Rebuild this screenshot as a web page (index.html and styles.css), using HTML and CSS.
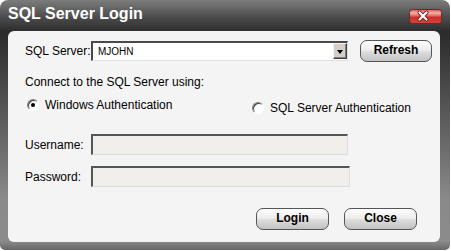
FILE: index.html
```html
<!DOCTYPE html>
<html lang="en">
<head>
    <meta charset="UTF-8">
    <meta name="viewport" content="width=device-width, initial-scale=1.0">
    <title>SQL Server Login</title>
    <link rel="stylesheet" href="styles.css">
</head>
<body>
    <div class="window">
        <div class="titlebar">
            <h1 class="title">SQL Server Login</h1>
            <button class="close-btn" title="Close">
                <svg width="33" height="15" viewBox="0 0 33 15">
                    <defs>
                        <linearGradient id="red" x1="0" y1="0" x2="0" y2="1">
                            <stop offset="0" stop-color="#d8564e"/>
                            <stop offset="0.25" stop-color="#f2b0aa"/>
                            <stop offset="0.45" stop-color="#e26a62"/>
                            <stop offset="0.55" stop-color="#c8302a"/>
                            <stop offset="1" stop-color="#d9463c"/>
                        </linearGradient>
                    </defs>
                    <rect x="0.5" y="0.5" width="32" height="14" rx="3" fill="url(#red)" stroke="#6e2622"/>
                    <path d="M10.5 3.5l7 7M17.5 3.5l-7 7" stroke="#7a1d18" stroke-width="4" stroke-linecap="round"/>
                    <path d="M10.5 3.5l7 7M17.5 3.5l-7 7" stroke="#fff" stroke-width="2.2" stroke-linecap="round"/>
                </svg>
            </button>
        </div>

        <div class="panel">
            <div class="server-row">
                <label class="field-label">SQL Server:</label>
                <div class="combo">
                    <span class="combo-value">MJOHN</span>
                    <span class="combo-arrow"></span>
                </div>
                <button class="btn btn-refresh">Refresh</button>
            </div>

            <p class="connect-text">Connect to the SQL Server using:</p>

            <div class="auth-row">
                <label class="radio-option">
                    <span class="radio checked"></span>
                    Windows Authentication
                </label>
                <label class="radio-option radio-sql">
                    <span class="radio"></span>
                    SQL Server Authentication
                </label>
            </div>

            <div class="field-row field-user">
                <label class="field-label">Username:</label>
                <input class="text-input" type="text">
            </div>
            <div class="field-row field-pass">
                <label class="field-label">Password:</label>
                <input class="text-input text-wide" type="password">
            </div>

            <div class="actions">
                <button class="btn">Login</button>
                <button class="btn">Close</button>
            </div>
        </div>
    </div>
</body>
</html>
```

FILE: styles.css
```css
* {
    box-sizing: border-box;
}

body {
    margin: 0;
    background: #fff;
    font-family: "Liberation Sans", Arial, sans-serif;
    font-size: 12px;
    color: #000;
}

.window {
    width: 450px;
    height: 250px;
    padding: 0 10px 8px 8px;
    display: flex;
    flex-direction: column;
    border-radius: 8px 8px 5px 5px;
    background: linear-gradient(to bottom, #7c7c7c 0, #4a4a4a 18px, #2b2b2b 32px, #3a3a3a 60px, #8a8a8a 200px, #8c8c8c 241px, #666 250px);
}

.titlebar {
    height: 31px;
    display: flex;
    justify-content: space-between;
    align-items: flex-start;
}

.title {
    margin: 6px 0 0;
    font-size: 16px;
    line-height: 16px;
    font-weight: bold;
    color: #fff;
}

.close-btn {
    margin: 9px -2px 0 0;
    padding: 0;
    border: none;
    background: none;
    width: 33px;
    height: 15px;
    display: block;
    cursor: pointer;
}

.close-btn svg {
    display: block;
}

.panel {
    flex: 1;
    background: #f4f4f4;
    border-radius: 6px;
    padding: 9px 8px 0 17px;
}

.field-label {
    width: 66px;
    flex-shrink: 0;
    line-height: 14px;
}

.server-row {
    display: flex;
    align-items: center;
    height: 22px;
}

.combo {
    width: 257px;
    height: 20px;
    display: flex;
    background: #fff;
    border-style: solid;
    border-width: 2px 1px 1px 2px;
    border-color: #4a4a4a #e2e2e2 #e2e2e2 #4a4a4a;
}

.combo-value {
    flex: 1;
    padding-left: 5px;
    font-size: 10px;
    line-height: 17px;
}

.combo-arrow {
    width: 14px;
    height: 16px;
    margin-top: 0;
    background: #d4d0c8;
    border-style: solid;
    border-width: 1px;
    border-color: #f4f4f4 #404040 #404040 #f4f4f4;
    box-shadow: inset -1px -1px 0 #808080;
    display: flex;
    align-items: center;
    justify-content: center;
}

.combo-arrow::after {
    content: "";
    border-left: 3.5px solid transparent;
    border-right: 3.5px solid transparent;
    border-top: 4px solid #000;
    margin-top: 1px;
}

.btn {
    width: 73px;
    height: 22px;
    padding: 0 0 3px;
    border: 1px solid #555;
    border-radius: 7px;
    background: linear-gradient(to bottom, #fdfdfd 0, #ededed 45%, #dcdcdc 55%, #c2c2c2 100%);
    font-family: inherit;
    font-size: 12px;
    font-weight: bold;
    color: #000;
    cursor: pointer;
}

.btn-refresh {
    width: 72px;
    margin-left: 12px;
}

.connect-text {
    margin: 13px 0 0;
    line-height: 14px;
}

.auth-row {
    display: flex;
    align-items: flex-start;
    margin-top: 9px;
}

.radio-option {
    display: flex;
    align-items: center;
    gap: 6px;
    line-height: 14px;
}

.radio-option:first-child {
    margin-left: 2px;
    width: 225px;
}

.radio-sql {
    margin-top: 3px;
}

.radio {
    width: 12px;
    height: 12px;
    border-radius: 50%;
    background: #fff;
    border: 1px solid;
    border-color: #808080 #fff #fff #808080;
    box-shadow: inset 1px 1px 0 #404040;
    display: flex;
    align-items: center;
    justify-content: center;
}

.radio.checked::after {
    content: "";
    width: 4px;
    height: 4px;
    border-radius: 50%;
    background: #000;
}

.field-row {
    display: flex;
    align-items: center;
}

.field-user {
    margin-top: 19px;
}

.field-pass {
    margin-top: 11px;
}

.text-input {
    width: 257px;
    height: 21px;
    margin: 0;
    background: #f0efeb;
    border-style: solid;
    border-width: 2px 1px 1px 2px;
    border-color: #555 #dcdcdc #dcdcdc #555;
    outline: none;
}

.text-wide {
    width: 259px;
}

.actions {
    display: flex;
    justify-content: flex-end;
    gap: 15px;
    margin-top: 21px;
    padding-right: 15px;
}
```
